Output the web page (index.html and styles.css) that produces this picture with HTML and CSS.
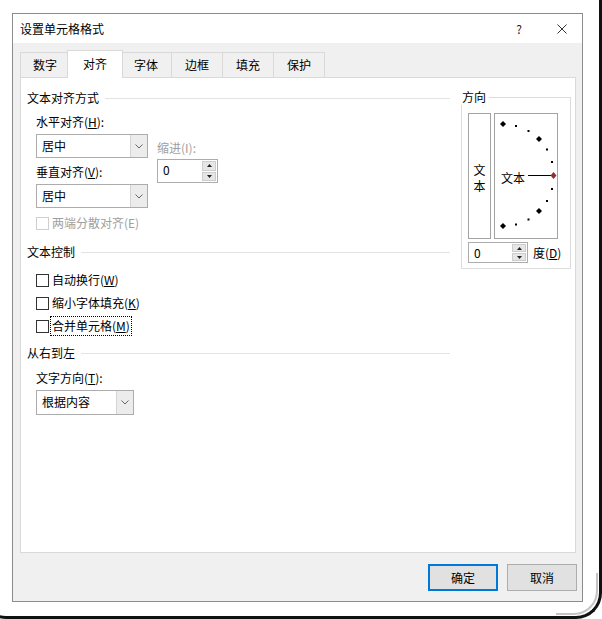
FILE: index.html
```html
<!DOCTYPE html>
<html lang="zh-CN">
<head>
<meta charset="utf-8">
<title>设置单元格格式</title>
<link rel="stylesheet" href="styles.css">
</head>
<body>
<div class="screen">
  <div class="dialog">
    <div class="titlebar">
      <span class="title">设置单元格格式</span>
      <span class="help">?</span>
      <svg class="close" width="10" height="10" viewBox="0 0 10 10"><path d="M0.5 0.5L9.5 9.5M9.5 0.5L0.5 9.5" stroke="#333" stroke-width="1"/></svg>
    </div>
    <div class="tabs">
      <div class="tab first">数字</div>
      <div class="tab active">对齐</div>
      <div class="tab">字体</div>
      <div class="tab">边框</div>
      <div class="tab">填充</div>
      <div class="tab">保护</div>
    </div>
    <div class="panel">
      <div class="left">
        <div class="group-head">文本对齐方式</div>
        <div class="field-row">
          <div class="col-a">
            <div class="label">水平对齐(<u>H</u>):</div>
            <div class="select sel-a">
              <span class="val">居中</span>
              <span class="arrow"><svg width="8" height="5" viewBox="0 0 8 5"><polyline points="0.5,0.5 4,4 7.5,0.5" fill="none" stroke="#666" stroke-width="1"/></svg></span>
            </div>
            <div class="label label-2">垂直对齐(<u>V</u>):</div>
            <div class="select sel-a">
              <span class="val">居中</span>
              <span class="arrow"><svg width="8" height="5" viewBox="0 0 8 5"><polyline points="0.5,0.5 4,4 7.5,0.5" fill="none" stroke="#666" stroke-width="1"/></svg></span>
            </div>
          </div>
          <div class="col-b">
            <div class="label disabled">缩进(I):</div>
            <div class="spin spin-indent">
              <span class="val">0</span>
              <span class="btns">
                <span class="sbtn"><svg width="5" height="3" viewBox="0 0 5 3"><polygon points="0,3 2.5,0 5,3" fill="#222"/></svg></span>
                <span class="sbtn"><svg width="5" height="3" viewBox="0 0 5 3"><polygon points="0,0 5,0 2.5,3" fill="#222"/></svg></span>
              </span>
            </div>
          </div>
        </div>
        <div class="check disabled check-dist"><span class="box"></span><span>两端分散对齐(E)</span></div>

        <div class="group-head gh-2">文本控制</div>
        <div class="check check-1"><span class="box"></span><span>自动换行(<u>W</u>)</span></div>
        <div class="check check-n"><span class="box"></span><span>缩小字体填充(<u>K</u>)</span></div>
        <div class="check check-n"><span class="box"></span><span class="focus">合并单元格(<u>M</u>)</span></div>

        <div class="group-head gh-3">从右到左</div>
        <div class="label label-dir">文字方向(<u>T</u>):</div>
        <div class="select sel-dir">
          <span class="val">根据内容</span>
          <span class="arrow"><svg width="8" height="5" viewBox="0 0 8 5"><polyline points="0.5,0.5 4,4 7.5,0.5" fill="none" stroke="#666" stroke-width="1"/></svg></span>
        </div>
      </div>

      <div class="right">
        <div class="orient">
          <div class="legend">方向</div>
          <div class="boxes">
            <div class="vtext">文<br>本</div>
            <div class="dial">
              <svg class="dial-svg" width="62" height="124" viewBox="0 0 62 124">
                <line x1="33" y1="61.5" x2="56" y2="61.5" stroke="#000" stroke-width="1"/>
                <polygon points="8,7 11,10 8,13 5,10" fill="#000"/>
                <rect x="20" y="11" width="2" height="2" fill="#000"/>
                <rect x="32.5" y="16" width="2" height="2" fill="#000"/>
                <polygon points="44,22 47,25 44,28 41,25" fill="#000"/>
                <rect x="51" y="34.5" width="2" height="2" fill="#000"/>
                <rect x="56" y="47" width="2" height="2" fill="#000"/>
                <polygon points="58.5,58 61.5,61.5 58.5,65 55.5,61.5" fill="#9b2a2a"/>
                <rect x="56" y="74" width="2" height="2" fill="#000"/>
                <rect x="51" y="86" width="2" height="2" fill="#000"/>
                <polygon points="44,94 47,97 44,100 41,97" fill="#000"/>
                <rect x="32.5" y="104.5" width="2" height="2" fill="#000"/>
                <rect x="20" y="109.5" width="2" height="2" fill="#000"/>
                <polygon points="8,109 11,112 8,115 5,112" fill="#000"/>
              </svg>
              <span class="dial-text">文本</span>
            </div>
          </div>
          <div class="deg-row">
            <div class="spin spin-deg">
              <span class="val">0</span>
              <span class="btns">
                <span class="sbtn"><svg width="5" height="3" viewBox="0 0 5 3"><polygon points="0,3 2.5,0 5,3" fill="#222"/></svg></span>
                <span class="sbtn"><svg width="5" height="3" viewBox="0 0 5 3"><polygon points="0,0 5,0 2.5,3" fill="#222"/></svg></span>
              </span>
            </div>
            <span class="deg-label">度(<u>D</u>)</span>
          </div>
        </div>
      </div>
    </div>
    <div class="buttons">
      <div class="btn primary">确定</div>
      <div class="btn">取消</div>
    </div>
  </div>
  <div class="frame"></div>
  <div class="frame-inner"></div>
  <div class="frame-left"></div>
</div>
</body>
</html>
```
FILE: styles.css
```css
html, body {
  margin: 0;
  padding: 0;
  background: #fff;
}

body {
  font-family: "Noto Sans CJK SC", "Microsoft YaHei", sans-serif;
  font-size: 12px;
  color: #000;
}

.screen {
  position: relative;
  width: 602px;
  height: 619px;
  overflow: hidden;
}

.dialog {
  margin: 13px 0 0 12px;
  width: 571px;
  height: 589px;
  box-sizing: border-box;
  border: 1px solid #8c8c8c;
  background: #f0f0f0;
  display: flex;
  flex-direction: column;
}

.titlebar {
  height: 29px;
  flex: none;
  background: #fff;
  display: flex;
  align-items: center;
  padding-left: 7px;
}

.title {
  flex: 1;
  line-height: 16px;
}

.help {
  width: 8px;
  text-align: center;
  line-height: 16px;
  margin-right: 34px;
  color: #222;
}

.close {
  margin-right: 15px;
}

.tabs {
  display: flex;
  align-items: flex-end;
  height: 34px;
  flex: none;
  box-sizing: border-box;
  padding: 7px 0 0 7px;
}

.tab {
  box-sizing: border-box;
  width: 52px;
  height: 25px;
  border: 1px solid #d9d9d9;
  border-bottom: none;
  margin-left: -1px;
  text-align: center;
  line-height: 24px;
  background: #f0f0f0;
}

.tab.first {
  width: 50px;
  margin-left: 0;
}

.tab.active {
  position: relative;
  z-index: 2;
  width: 56px;
  height: 28px;
  margin-left: -3px;
  margin-right: -2px;
  margin-bottom: -1px;
  background: #fff;
  line-height: 26px;
}

.panel {
  position: relative;
  z-index: 1;
  margin: 0 6px 0 7px;
  height: 476px;
  flex: none;
  box-sizing: border-box;
  background: #fff;
  border: 1px solid #d9d9d9;
  display: flex;
  gap: 11px;
  padding: 12px 4px 0 6px;
}

.left {
  width: 423px;
  flex: none;
  display: flex;
  flex-direction: column;
}

.right {
  width: 110px;
  flex: none;
}

.group-head {
  display: flex;
  align-items: center;
  line-height: 16px;
  white-space: nowrap;
}

.group-head::after {
  content: "";
  flex: 1;
  height: 1px;
  background: #e3e3e3;
  margin-left: 6px;
}

.gh-2 { margin-top: 13px; }
.gh-3 { margin-top: 11px; }

.label {
  line-height: 16px;
  white-space: nowrap;
}

.disabled {
  color: #a0a0a0;
}

.field-row {
  display: flex;
  margin: 8px 0 0 9px;
}

.col-a {
  width: 112px;
  display: flex;
  flex-direction: column;
}

.col-b {
  margin-left: 9px;
  padding-top: 26px;
  display: flex;
  flex-direction: column;
}

.label-2 { margin-top: 6px; }

.select {
  display: flex;
  box-sizing: border-box;
  border: 1px solid #acacac;
  background: #fff;
  height: 24px;
  margin-top: 4px;
}

.select .val {
  flex: 1;
  padding-left: 5px;
  line-height: 22px;
}

.select .arrow {
  width: 16px;
  border-left: 1px solid #d4d4d4;
  background: #ececec;
  display: flex;
  align-items: center;
  justify-content: center;
}

.sel-a { width: 112px; }

.sel-dir {
  width: 98px;
  height: 25px;
  margin-left: 9px;
}

.spin {
  display: flex;
  box-sizing: border-box;
  border: 1px solid #acacac;
  background: #fff;
}

.spin .val {
  flex: 1;
  padding-left: 5px;
}

.spin .btns {
  width: 16px;
  box-sizing: border-box;
  padding: 1px;
  display: flex;
  flex-direction: column;
  gap: 1px;
}

.sbtn {
  flex: 1;
  background: #e6e6e6;
  border: 1px solid #cdcdcd;
  display: flex;
  align-items: center;
  justify-content: center;
}

.spin-indent {
  width: 61px;
  height: 24px;
  margin-top: 3px;
}

.spin-indent .val { line-height: 20px; }

.spin-deg {
  width: 60px;
  height: 21px;
}

.spin-deg .val { line-height: 19px; }

.check {
  display: flex;
  align-items: center;
  line-height: 16px;
  margin-left: 9px;
  white-space: nowrap;
}

.check .box {
  width: 13px;
  height: 13px;
  box-sizing: border-box;
  border: 1px solid #333;
  background: #fff;
  margin-right: 3px;
  flex: none;
}

.check.disabled .box {
  border-color: #cfcfcf;
}

.check-dist { margin-top: 7px; }
.check-1 { margin-top: 12px; }
.check-n { margin-top: 7px; }

.focus {
  outline: 1px dotted #000;
  outline-offset: 1px;
}

.label-dir {
  margin: 9px 0 0 9px;
}

.orient {
  margin-top: 7px;
  height: 172px;
  box-sizing: border-box;
  border: 1px solid #dcdcdc;
  padding: 0 5px 0 6px;
}

.legend {
  margin: -9px 0 0 -7px;
  padding: 0 3px 0 1px;
  width: max-content;
  background: #fff;
  line-height: 16px;
}

.boxes {
  display: flex;
  gap: 3px;
  margin-top: 8px;
}

.vtext {
  width: 23px;
  height: 126px;
  box-sizing: border-box;
  border: 1px solid #a3a3a3;
  display: flex;
  align-items: center;
  justify-content: center;
  text-align: center;
  line-height: 16px;
  padding-top: 4px;
}

.dial {
  position: relative;
  width: 64px;
  height: 126px;
  box-sizing: border-box;
  border: 1px solid #a3a3a3;
  display: flex;
  align-items: center;
}

.dial-svg {
  position: absolute;
  left: 0;
  top: 0;
}

.dial-text {
  padding-left: 6px;
  line-height: 16px;
  padding-top: 3px;
}

.deg-row {
  display: flex;
  align-items: center;
  margin-top: 3px;
}

.deg-label {
  margin-left: 5px;
  line-height: 16px;
}

.buttons {
  display: flex;
  justify-content: flex-end;
  gap: 9px;
  margin-top: 11px;
  padding-right: 5px;
}

.btn {
  width: 70px;
  height: 27px;
  box-sizing: border-box;
  border: 1px solid #adadad;
  background: #e1e1e1;
  text-align: center;
  line-height: 25px;
}

.btn.primary {
  border-color: #0078d7;
  box-shadow: inset 0 0 0 1px #0078d7;
}

.frame {
  position: absolute;
  left: 20px;
  top: -40px;
  right: 0;
  bottom: 0;
  border-right: 3px solid #111;
  border-bottom: 3px solid #111;
  border-bottom-right-radius: 26px;
  pointer-events: none;
}

.frame-inner {
  position: absolute;
  right: 4px;
  bottom: 4px;
  width: 40px;
  height: 40px;
  border-right: 2px solid #c4c4c4;
  border-bottom: 2px solid #c4c4c4;
  border-bottom-right-radius: 24px;
  pointer-events: none;
}

.frame-left {
  position: absolute;
  left: -20px;
  bottom: 0;
  width: 44px;
  height: 40px;
  border-left: 3px solid #111;
  border-bottom: 3px solid #111;
  border-bottom-left-radius: 26px;
  pointer-events: none;
}
```
